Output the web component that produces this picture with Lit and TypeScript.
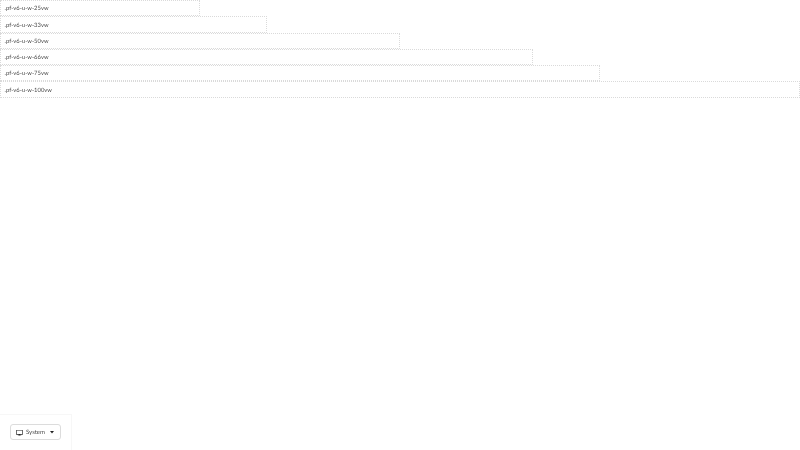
import { LitElement, html, css } from "lit";
import { customElement } from "lit/decorators.js";

const rows = [
  ["25vw", 25],
  ["33vw", 33.33],
  ["50vw", 50],
  ["66vw", 66.66],
  ["75vw", 75],
  ["100vw", 100],
] as const;

@customElement("app-root")
export class AppRoot extends LitElement {
  static styles = css`
    :host {
      display: block;
      width: 800px;
      height: 450px;
      position: relative;
      overflow: hidden;
      background: #fff;
      font-family: "Lato", "Liberation Sans", sans-serif;
      text-rendering: geometricPrecision;
      color: #222;
    }
    .row {
      box-sizing: border-box;
      height: 16.3px;
      border: 1px dotted #dadada;
      padding: 2px 0 0 3.6px;
      display: flex;
      align-items: center;
      font-size: 5.85px;
      line-height: 1;
      white-space: nowrap;
    }
    .txt {
      opacity: 0.82;
      will-change: opacity;
    }
    .panel {
      position: absolute;
      left: 0;
      bottom: 0;
      width: 72px;
      height: 36px;
      box-sizing: border-box;
      border-top: 1px solid #f7f7f7;
      border-right: 1px solid #f7f7f7;
      padding-left: 10px;
      padding-top: 9px;
    }
    .btn {
      box-sizing: border-box;
      width: 51px;
      height: 16px;
      border: 1px solid #dcdcdc;
      border-radius: 3px;
      display: flex;
      align-items: center;
      padding: 1px 0 0 5px;
      font-size: 6px;
      color: #222;
      background: #fff;
    }
    .mon { width: 7px; height: 7px; margin-right: 3px; flex: none; }
    .caret { width: 4px; height: 2.5px; margin-left: 5px; flex: none; }
  `;

  render() {
    return html`
      ${rows.map(
        ([name, w]) =>
          html`<div class="row" style="width:${w}%"><span class="txt">.pf-v6-u-w-${name}</span></div>`
      )}
      <div class="panel">
        <div class="btn">
          <svg class="mon" viewBox="0 0 16 16">
            <path
              fill="#222"
              d="M1.5 2h13A1.5 1.5 0 0 1 16 3.5v8a1.5 1.5 0 0 1-1.5 1.5H10v1h2v1H4v-1h2v-1H1.5A1.5 1.5 0 0 1 0 11.5v-8A1.5 1.5 0 0 1 1.5 2Zm0 1.5v8h13v-8Z"
            />
          </svg>
          <span class="txt">System</span>
          <svg class="caret" viewBox="0 0 10 6"><path fill="#222" d="M0 0h10L5 6Z" /></svg>
        </div>
      </div>
    `;
  }
}
